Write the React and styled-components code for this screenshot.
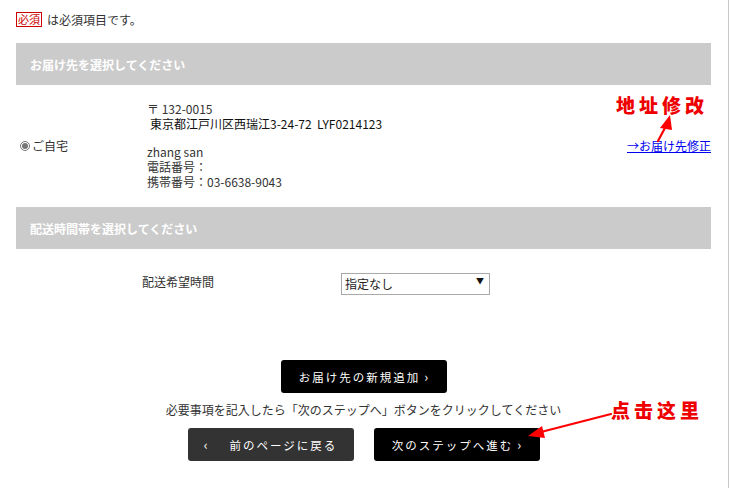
import React, { useState } from "react";
import styled, { createGlobalStyle } from "styled-components";

const GlobalStyle = createGlobalStyle`
  body {
    margin: 0;
    background: #fff;
    font-family: "Noto Sans CJK JP", "Noto Sans", sans-serif;
    color: #333;
  }
`;

const App = () => {
  const [time, setTime] = useState("none");

  return (
    <Page>
      <GlobalStyle />
      <TopNote>
        <RequiredBadge>必須</RequiredBadge>
        <span>は必須項目です。</span>
      </TopNote>

      <SectionBar>お届け先を選択してください</SectionBar>
      <AddressRow>
        <RadioLabel>
          <Radio type="radio" name="addr" defaultChecked />
          ご自宅
        </RadioLabel>
        <AddressBlock>
          <Line>〒 132-0015</Line>
          <Line $strong>東京都江戸川区西瑞江3-24-72&nbsp;&nbsp;LYF0214123</Line>
          <Contact>
            <Line>zhang san</Line>
            <Line>電話番号：</Line>
            <Line>携帯番号：03-6638-9043</Line>
          </Contact>
        </AddressBlock>
        <EditLink href="#">→お届け先修正</EditLink>
      </AddressRow>

      <SectionBar>配送時間帯を選択してください</SectionBar>
      <TimeRow>
        <FieldLabel>配送希望時間</FieldLabel>
        <SelectWrap>
          <Select value={time} onChange={(e) => setTime(e.target.value)}>
            <option value="none">指定なし</option>
            <option value="am">午前中</option>
            <option value="pm">14時～16時</option>
          </Select>
          <SelectArrow>▼</SelectArrow>
        </SelectWrap>
      </TimeRow>

      <Actions>
        <Button>
          お届け先の新規追加<Chevron>›</Chevron>
        </Button>
        <Hint>必要事項を記入したら「次のステップへ」ボタンをクリックしてください</Hint>
        <NavRow>
          <Button $back>
            <Chevron $left>‹</Chevron>前のページに戻る
          </Button>
          <Button>
            次のステップへ進む<Chevron>›</Chevron>
          </Button>
        </NavRow>
      </Actions>

      <Annotation $x={616} $y={93}>地址修改</Annotation>
      <Annotation $x={611} $y={398}>点击这里</Annotation>
      <Overlay width="729" height="488" viewBox="0 0 729 488">
        <g stroke="#f00" strokeWidth="2.2" fill="#f00" strokeLinecap="round">
          <line x1="658" y1="141" x2="666" y2="126" />
          <polygon points="670,115 660,128 672,130" stroke="none" />
          <line x1="611" y1="414" x2="541" y2="432" />
          <polygon points="528,436 542,426 545,438" stroke="none" />
        </g>
      </Overlay>
    </Page>
  );
};

const Page = styled.div`
  position: relative;
  width: 729px;
  height: 488px;
  box-sizing: border-box;
  padding: 0 17px 0 16px;
  border-right: 1px solid #c8c8c8;
  overflow: hidden;
`;

const TopNote = styled.div`
  height: 43px;
  box-sizing: border-box;
  padding-top: 12px;
  display: flex;
  align-items: flex-start;
  gap: 5px;
  font-size: 12px;
  line-height: 16px;
`;

const RequiredBadge = styled.span`
  display: inline-flex;
  align-items: center;
  height: 13px;
  padding: 0 1px;
  border: 1px solid #c00;
  color: #c00;
  font-size: 11px;
  line-height: 13px;
`;

const SectionBar = styled.div`
  height: 42px;
  display: flex;
  align-items: center;
  padding-left: 14px;
  background: #cbcbcb;
  color: #fff;
  font-size: 12px;
  font-weight: 700;
`;

const AddressRow = styled.div`
  display: grid;
  grid-template-columns: 131px 1fr auto;
  align-items: center;
  height: 122px;
  box-sizing: border-box;
  padding: 15px 0 18px;
`;

const RadioLabel = styled.label`
  display: flex;
  align-items: center;
  padding: 2px 0 0 4px;
  font-size: 12px;
`;

const Radio = styled.input`
  width: 10px;
  height: 10px;
  margin: 0 2px 0 0;
  accent-color: #777;
`;

const AddressBlock = styled.div`
  font-size: 12px;
`;

const Line = styled.div`
  line-height: ${(p) => (p.$strong ? "16px" : "15px")};
  padding-left: ${(p) => (p.$strong ? "3px" : "0")};
  color: ${(p) => (p.$strong ? "#111" : "#333")};
  white-space: nowrap;
`;

const Contact = styled.div`
  margin-top: 12px;
`;

const EditLink = styled.a`
  align-self: center;
  padding-top: 2px;
  color: #0000ee;
  font-size: 12px;
  text-decoration: underline;
`;

const TimeRow = styled.div`
  display: flex;
  align-items: center;
  padding: 21px 0 0 126px;
`;

const FieldLabel = styled.div`
  width: 199px;
  font-size: 12px;
`;

const SelectWrap = styled.div`
  position: relative;
  width: 149px;
  height: 22px;
`;

const Select = styled.select`
  width: 100%;
  height: 100%;
  box-sizing: border-box;
  padding: 0 3px;
  border: 1px solid #a9a9a9;
  border-radius: 0;
  background: #fff;
  font-family: inherit;
  font-size: 12px;
  color: #222;
  appearance: none;
  outline: none;
`;

const SelectArrow = styled.span`
  position: absolute;
  right: 6px;
  top: 5px;
  font-size: 8px;
  color: #111;
  pointer-events: none;
`;

const Actions = styled.div`
  display: flex;
  flex-direction: column;
  align-items: center;
  margin-top: 68px;
`;

const Button = styled.button`
  width: 166px;
  height: 33px;
  display: flex;
  align-items: center;
  justify-content: center;
  border: none;
  border-radius: 3px;
  background: ${(p) => (p.$back ? "#333" : "#000")};
  color: #fff;
  font-family: inherit;
  font-size: 11.5px;
  letter-spacing: 2px;
  cursor: pointer;
`;

const Chevron = styled.span`
  font-size: 13px;
  letter-spacing: 0;
  margin: ${(p) => (p.$left ? "0 22px 0 0" : "0 0 0 4px")};
`;

const Hint = styled.p`
  margin: 9px 0 10px;
  font-size: 12px;
  line-height: 16px;
`;

const NavRow = styled.div`
  display: flex;
  gap: 20px;
`;

const Annotation = styled.div`
  position: absolute;
  left: ${(p) => p.$x}px;
  top: ${(p) => p.$y}px;
  color: #ee0000;
  font-family: "Noto Sans CJK SC", sans-serif;
  font-size: 19px;
  font-weight: 900;
  letter-spacing: 4px;
  line-height: 24px;
`;

const Overlay = styled.svg`
  position: absolute;
  left: 0;
  top: 0;
  pointer-events: none;
`;

export default App;
